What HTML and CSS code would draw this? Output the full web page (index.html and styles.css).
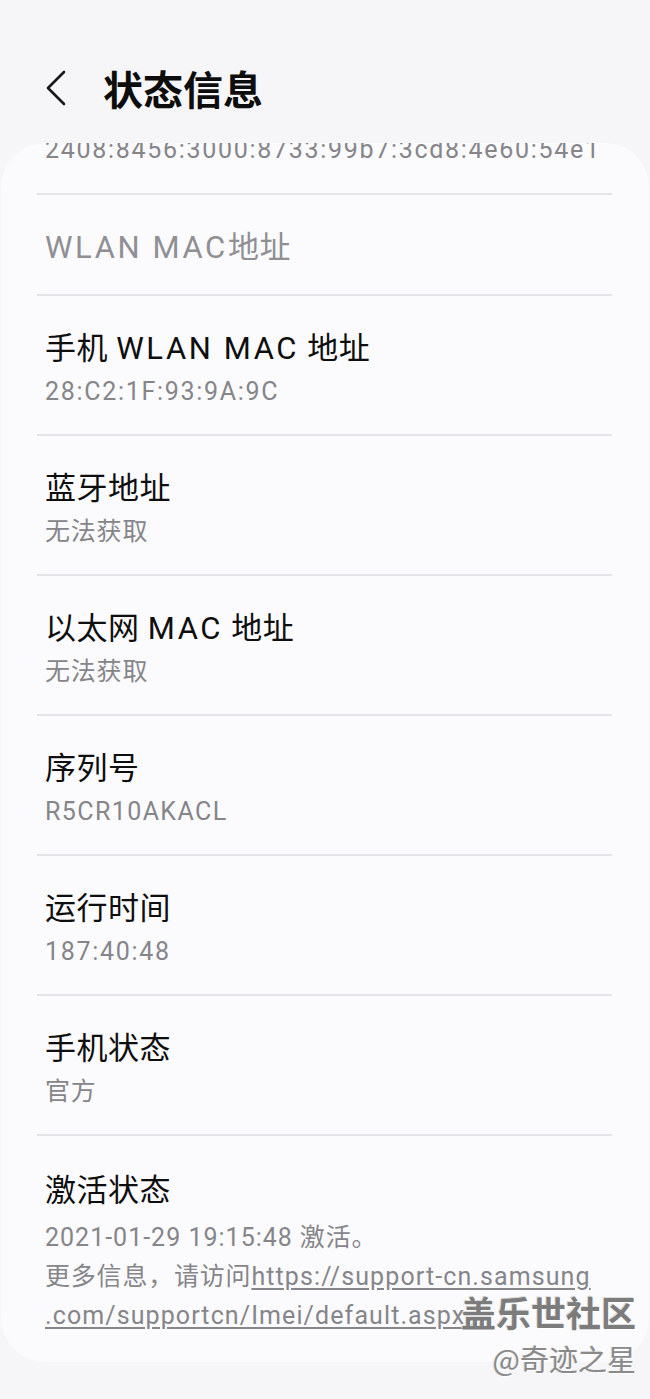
FILE: index.html
```html
<!DOCTYPE html>
<html lang="zh-CN">
<head>
<meta charset="utf-8">
<title>状态信息</title>
<link rel="stylesheet" href="styles.css">
</head>
<body>
<div class="screen">
  <header class="appbar">
    <svg class="back" width="22" height="36" viewBox="0 0 22 36" aria-hidden="true">
      <polyline points="19,2 3,18 19,34" fill="none" stroke="#1a1a1a" stroke-width="2.6" stroke-linecap="round" stroke-linejoin="round"/>
    </svg>
    <h1 class="title">状态信息</h1>
  </header>

  <main class="card">
    <div class="row row-partial">
      <div class="value num">2408:8456:3000:8733:99b7:3cd8:4e60:54e1</div>
    </div>
    <div class="divider"></div>
    <div class="row row-header">
      <div class="section"><span class="en">WLAN MAC</span>地址</div>
    </div>
    <div class="divider"></div>
    <div class="row">
      <div class="label">手机 <span class="en">WLAN MAC</span> 地址</div>
      <div class="value num">28:C2:1F:93:9A:9C</div>
    </div>
    <div class="divider"></div>
    <div class="row">
      <div class="label">蓝牙地址</div>
      <div class="value">无法获取</div>
    </div>
    <div class="divider"></div>
    <div class="row">
      <div class="label">以太网 <span class="en">MAC</span> 地址</div>
      <div class="value">无法获取</div>
    </div>
    <div class="divider"></div>
    <div class="row">
      <div class="label">序列号</div>
      <div class="value serial">R5CR10AKACL</div>
    </div>
    <div class="divider"></div>
    <div class="row">
      <div class="label">运行时间</div>
      <div class="value num">187:40:48</div>
    </div>
    <div class="divider"></div>
    <div class="row">
      <div class="label">手机状态</div>
      <div class="value">官方</div>
    </div>
    <div class="divider"></div>
    <div class="row row-last">
      <div class="label">激活状态</div>
      <div class="value multi"><span class="date">2021-01-29 19:15:48</span> 激活。<br>更多信息，请访问<a class="link" href="#">https://support-cn.samsung<br>.com/supportcn/Imei/default.aspx</a>。</div>
    </div>
  </main>

  <div class="watermark">
    <div class="wm-big">盖乐世社区</div>
    <div class="wm-small">@奇迹之星</div>
  </div>
</div>
</body>
</html>
```

FILE: styles.css
```css
html, body {
  margin: 0;
  padding: 0;
}
body {
  background: #f6f6f9;
  font-family: "Roboto", "Noto Sans CJK SC", sans-serif;
  color: #111;
}
.screen {
  position: relative;
  width: 650px;
  height: 1399px;
  overflow: hidden;
}
.appbar {
  height: 143px;
  box-sizing: border-box;
  padding: 32px 0 0 45px;
  display: flex;
  align-items: center;
  gap: 36px;
}
.back {
  display: block;
  flex: none;
}
.title {
  margin: 0;
  font-family: "Noto Sans CJK SC", sans-serif;
  font-size: 40px;
  font-weight: 700;
  color: #0d0d0d;
  line-height: 50px;
}
.card {
  margin: 0 1px;
  background: #fbfbfe;
  border-radius: 44px;
  overflow: hidden;
  padding: 0 37px 0 36px;
}
.divider {
  height: 2px;
  background: #e4e4e9;
}
.row {
  padding: 33px 0 20px 8px;
}
.row-partial {
  margin-top: -16px;
  padding-top: 0;
  padding-bottom: 21px;
}
.row-header {
  padding: 33px 0 26px 8px;
}
.row-last {
  padding: 35px 0 27px 8px;
}
.label {
  font-size: 31px;
  line-height: 40px;
  color: #0e0e0e;
  letter-spacing: 0.5px;
}
.section {
  font-size: 31px;
  line-height: 40px;
  color: #8f8f94;
  letter-spacing: 0.5px;
}
.en {
  letter-spacing: 2.6px;
}
.value {
  font-size: 25px;
  line-height: 45px;
  color: #85858a;
  white-space: nowrap;
  letter-spacing: 0.8px;
}
.value.num {
  letter-spacing: 1.7px;
}
.value.serial {
  letter-spacing: 1.4px;
}
.value.multi {
  line-height: 39px;
  margin-top: 7px;
}
.date {
  letter-spacing: 1px;
}
.link {
  color: #85858a;
  letter-spacing: 1.1px;
  text-decoration: underline;
  text-underline-offset: 3px;
}
.watermark {
  position: absolute;
  right: 14px;
  top: 1290px;
  display: flex;
  flex-direction: column;
  align-items: flex-end;
  gap: 6px;
  font-family: "Noto Sans CJK SC", sans-serif;
}
.wm-big {
  font-size: 35px;
  line-height: 44px;
  font-weight: 700;
  color: #7c7c7c;
  text-shadow: 1px 1px 0 #ffffff, -1px -1px 0 #dcdcdc;
}
.wm-small {
  font-size: 29px;
  line-height: 36px;
  color: #8a8a8a;
  text-shadow: 1px 1px 0 #ffffff, -1px 0 0 #e0e0e0;
}
```
